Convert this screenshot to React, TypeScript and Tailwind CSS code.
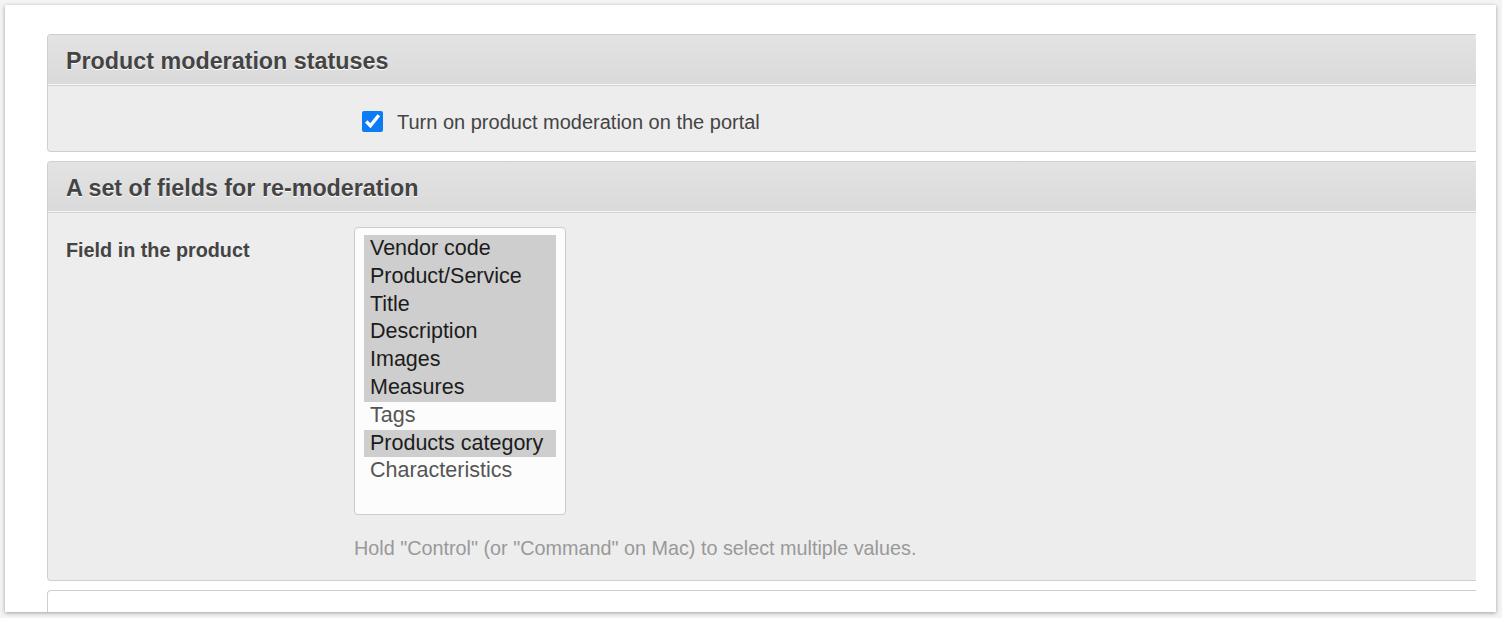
import React, { useState } from 'react';

const fields = [
  { name: 'Vendor code', on: true },
  { name: 'Product/Service', on: true },
  { name: 'Title', on: true },
  { name: 'Description', on: true },
  { name: 'Images', on: true },
  { name: 'Measures', on: true },
  { name: 'Tags', on: false },
  { name: 'Products category', on: true },
  { name: 'Characteristics', on: false },
];

function PanelHeader({ title }: { title: string }) {
  return (
    <div className="h-[50px] flex items-center px-[18px] pt-[3px] bg-gradient-to-b from-[#e3e3e3] to-[#dadada] border-b border-[#f6f6f6] rounded-t-[4px]">
      <h2 className="text-[23.3px] font-bold text-[#444] [text-shadow:0_1px_0_#fff]">{title}</h2>
    </div>
  );
}

export default function App() {
  const [moderation, setModeration] = useState(true);
  const [selected, setSelected] = useState(fields.map((f) => f.on));

  return (
    <div className="h-[618px] bg-[#f4f4f4] pl-[5px] pt-[5px] pr-[6px] pb-[6px] font-['Liberation_Sans',Arial,sans-serif]">
      <div className="h-full bg-white shadow-[0_1px_4px_rgba(0,0,0,0.35)] overflow-hidden pl-[42px] pr-[20px] pt-[29px]">
        {/* moderation panel */}
        <div className="border border-r-0 border-[#cfcfcf] rounded-l-[4px] bg-[#ededed]">
          <PanelHeader title="Product moderation statuses" />
          <div className="h-[66px] flex items-center pl-[314px] pt-[7px] border-t border-[#d4d4d4]">
            <label className="flex items-center gap-[14px] text-[20px] text-[#444] cursor-pointer">
              <input
                type="checkbox"
                checked={moderation}
                onChange={(e) => setModeration(e.target.checked)}
                className="w-[21px] h-[21px] accent-[#0b7cf6] -mt-[2px]"
              />
              Turn on product moderation on the portal
            </label>
          </div>
        </div>

        {/* re-moderation panel */}
        <div className="mt-[9px] border border-r-0 border-[#cfcfcf] rounded-l-[4px] bg-[#ededed]">
          <PanelHeader title="A set of fields for re-moderation" />
          <div className="h-[368px] flex border-t border-[#d4d4d4] pt-[14px]">
            <div className="w-[306px] pl-[18px] pt-[9px] text-[19.8px] font-bold text-[#444]">Field in the product</div>
            <div>
              <div className="w-[212px] h-[288px] bg-[#fcfcfc] border border-[#cccccc] rounded-[4px] px-[9px] pt-[7px]">
                {fields.map((f, i) => (
                  <div
                    key={f.name}
                    onClick={() => setSelected(selected.map((s, j) => (j === i ? !s : s)))}
                    className={`h-[27.8px] leading-[27.8px] px-[6px] text-[21.5px] cursor-default whitespace-nowrap ${
                      selected[i] ? 'bg-[#cecece] text-[#1c1c1c]' : 'text-[#555]'
                    }`}
                  >
                    {f.name}
                  </div>
                ))}
              </div>
              <p className="mt-[19px] text-[19.8px] text-[#999] whitespace-nowrap">
                Hold "Control" (or "Command" on Mac) to select multiple values.
              </p>
            </div>
          </div>
        </div>

        {/* next panel, cut off */}
        <div className="mt-[9px] h-[40px] border-t border-l border-[#cfcfcf] rounded-tl-[4px] bg-white" />
      </div>
    </div>
  );
}
